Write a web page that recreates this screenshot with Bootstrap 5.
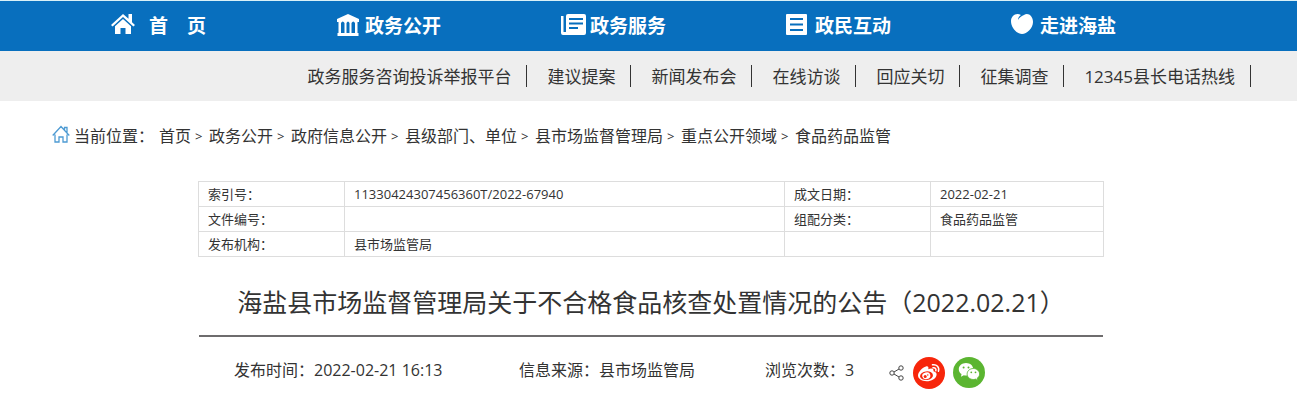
<!DOCTYPE html>
<html lang="zh-CN">
<head>
<meta charset="utf-8">
<meta name="viewport" content="width=device-width, initial-scale=1">
<title>海盐县市场监督管理局关于不合格食品核查处置情况的公告</title>
<link rel="stylesheet" href="https://cdn.jsdelivr.net/npm/bootstrap@5.3.0/dist/css/bootstrap.min.css">
<style>
body{font-family:"Open Sans","Noto Sans CJK SC",sans-serif;font-size:16px;line-height:24px;color:#333;background:#fff}
a{color:inherit;text-decoration:none}
.top-nav{background:#086fbe;border-top:1px solid #d9f1f8;color:#fff;font-size:19px;font-weight:700}
.top-nav .nav-list{max-width:1125px}
.top-nav a{height:50px;padding-left:25px}
.nav-ico{width:29px;flex:none}
.nav-ico svg{margin-bottom:4px}
.nav-home .nav-ico{width:38px}
.sub-nav{background:#eee;font-size:17px}
.page-wrap{max-width:1205px}
.sub-nav .page-wrap{min-height:50px;row-gap:8px}
.sub-nav li{padding:0 15px 0 20px;border-right:1px solid #333;height:22px;line-height:24px}
.crumbs{padding:23px 6px 33px}
.crumbs .home-ico{width:22px}
.crumb-label{margin-right:5px}
.crumb-sep{width:18px;padding-left:4px;font-size:13px}
.article{max-width:906px}
.article-shell{padding-left:5px}
.info-table{font-size:13px;line-height:18px;border-color:#ddd;table-layout:fixed}
.info-table td,.info-table th{height:25px;padding:3px 9px;font-weight:400;color:#333}
.c-label{width:146px}
.c-date{width:173px}
.article h1{font-size:25px;line-height:36px;font-weight:400;margin:27px 0 15px}
.rule{border:0;height:2px;background:#6e6c6d;opacity:1;margin:0 1px}
.meta{padding:20px 36px 0;line-height:26px}
.m-time{width:285px}
.m-src{width:246px}
.m-hits{width:124px}
.share-set{height:32px}
.share-btn{width:32px;height:32px}
.share-mark{width:16px;height:32px;margin-right:8px}
</style>
</head>
<body>
<nav class="top-nav" aria-label="主导航">
<ul class="nav-list list-unstyled mx-auto mb-0 row row-cols-5 g-0">
<li class="col nav-home"><a href="#" class="d-flex align-items-center"><span class="nav-ico"><svg class="d-block" width="24" height="24" viewBox="0 0 24 24" fill="#fff"><path d="M12 2 0 13l1.600 1.600L12 5l10.400 9.600L24 13l-3-2.800V2h-3.500v4.800z"/><path d="M12 7 4 14.300V22h5.500v-6h5v6H20v-7.700z"/></svg></span>首　页</a></li>
<li class="col"><a href="#" class="d-flex align-items-center"><span class="nav-ico"><svg class="d-block" width="24" height="24" viewBox="0 0 24 24" fill="#fff" fill-rule="evenodd"><path d="M12 2 1 7v3h1.500v11H1.500v3h21v-3h-1V10H23V7zM5 21V11q1.700-3 3.500 0v10zm5.500 0V11q1.500-3 3 0v10zm5 0V11q1.700-3 3.500 0v10z"/></svg></span>政务公开</a></li>
<li class="col"><a href="#" class="d-flex align-items-center"><span class="nav-ico"><svg class="d-block" width="25" height="24" viewBox="0 0 25 24"><path d="M0 4h2.500v16H5V4q0-2 2-2h16q2 0 2 2v17q0 2-2 2H2q-2 0-2-2z" fill="#fff"/><path d="M8 7h14M8 11.500h14M8 16h9" stroke="#086fbe" stroke-width="2"/></svg></span>政务服务</a></li>
<li class="col"><a href="#" class="d-flex align-items-center"><span class="nav-ico"><svg class="d-block" width="24" height="24" viewBox="0 0 24 24"><rect y="2" width="21" height="21" rx="1" fill="#fff"/><path d="M4 7h13M4 12.500h13M4 18h13" stroke="#086fbe" stroke-width="2"/></svg></span>政民互动</a></li>
<li class="col"><a href="#" class="d-flex align-items-center"><span class="nav-ico"><svg class="d-block" width="24" height="24" viewBox="0 0 24 24"><path d="M10 3C5 0 0 4 0 9c0 7 6 13 11 13s11-6 11-12c0-6-5-10-9-7-3 1-5 3-6 5 0-2 1-4 3-5z" fill="#fff"/></svg></span>走进海盐</a></li>
</ul>
</nav>
<nav class="sub-nav" aria-label="栏目导航">
<ul class="page-wrap list-unstyled mx-auto mb-0 d-flex flex-wrap justify-content-end align-items-center">
<li><a href="#">政务服务咨询投诉举报平台</a></li>
<li><a href="#">建议提案</a></li>
<li><a href="#">新闻发布会</a></li>
<li><a href="#">在线访谈</a></li>
<li><a href="#">回应关切</a></li>
<li><a href="#">征集调查</a></li>
<li><a href="#">12345县长电话热线</a></li>
</ul>
</nav>
<main class="page-wrap mx-auto">
<nav class="crumbs d-flex flex-wrap" aria-label="当前位置">
<span class="home-ico"><svg class="d-block" width="18" height="20" viewBox="0 0 18 20" fill="none" stroke="#4e9bd3" stroke-width="1.300"><path d="M.7 11.500 9 2.500l8.300 9M12.500 6V3.500H15V9M3 10.500V18h4v-5h4v5h4v-7.500"/></svg></span>
<span class="crumb-label">当前位置：</span>
<a href="#">首页</a><span class="crumb-sep">&gt;</span><a href="#">政务公开</a><span class="crumb-sep">&gt;</span><a href="#">政府信息公开</a><span class="crumb-sep">&gt;</span><a href="#">县级部门、单位</a><span class="crumb-sep">&gt;</span><a href="#">县市场监督管理局</a><span class="crumb-sep">&gt;</span><a href="#">重点公开领域</a><span class="crumb-sep">&gt;</span><a href="#">食品药品监管</a>
</nav>
<div class="article-shell">
<article class="article mx-auto">
<table class="info-table table table-bordered mb-0">
<colgroup><col class="c-label"><col><col class="c-label"><col class="c-date"></colgroup>
<tbody>
<tr><th scope="row">索引号：</th><td>11330424307456360T/2022-67940</td><th scope="row">成文日期：</th><td>2022-02-21</td></tr>
<tr><th scope="row">文件编号：</th><td></td><th scope="row">组配分类：</th><td>食品药品监管</td></tr>
<tr><th scope="row">发布机构：</th><td>县市场监管局</td><td></td><td></td></tr>
</tbody>
</table>
<h1 class="text-center">海盐县市场监督管理局关于不合格食品核查处置情况的公告（2022.02.21）</h1>
<hr class="rule">
<div class="meta d-flex flex-wrap align-items-start">
<span class="m-time">发布时间：2022-02-21 16:13</span>
<span class="m-src">信息来源：县市场监管局</span>
<span class="m-hits">浏览次数：3</span>
<div class="share-set d-flex align-items-center">
<button type="button" class="share-mark btn p-0 border-0 d-flex align-items-center" aria-label="分享"><svg width="16" height="16" viewBox="0 0 16 16" fill="none" stroke="#444"><circle cx="3" cy="8" r="2.200"/><circle cx="12" cy="3" r="2.200"/><circle cx="12" cy="13" r="2.200"/><path d="m5 7 5-3M5 9l5 3"/></svg></button>
<a href="#" class="share-btn me-2" aria-label="微博"><svg class="d-block" width="32" height="32" viewBox="0 0 32 32">
<circle cx="16" cy="16" r="16" fill="#f7260b"/>
<path d="M13 9.500c2-.6 2.900.8 2.300 2.700 2.700-1 5.600-1 5.200 2 2.500.7 3.500 2 3 4-.7 3.500-5 6-9.800 6C8.500 24.200 5 21.500 5 18.500c0-3.500 4.500-8 8-9z" fill="#fff"/>
<ellipse cx="13.500" cy="18.700" rx="6.500" ry="4.300" transform="rotate(-7 13.500 18.700)" fill="#f7260b"/>
<ellipse cx="13.300" cy="18.800" rx="4.100" ry="3.400" transform="rotate(-15 13.300 18.800)" fill="#fff"/>
<circle cx="12.200" cy="19.500" r="1.500" fill="#f7260b"/><circle cx="14.800" cy="18" r=".7" fill="#f7260b"/>
<path d="M19.500 7.800c4-.9 7.300 2.500 5.900 6.500M20 10.800c2.200-.4 3.500 1 2.800 3" fill="none" stroke="#fff" stroke-width="1.500" stroke-linecap="round"/>
</svg></a>
<a href="#" class="share-btn" aria-label="微信"><svg class="d-block" width="32" height="32" viewBox="0 0 32 32">
<ellipse cx="16" cy="15.500" rx="16" ry="15.500" fill="#5bb531"/>
<path d="M13 6C8.900 6 5.800 8.800 5.800 12.200c0 2 1 3.700 2.700 4.900l-.5 2.700 2.800-1.500c.7.200 1.500.3 2.300.3 4 0 7.200-2.900 7.200-6.300S17.200 6 13 6z" fill="#fff"/>
<path d="M20.300 11.500c-3.500 0-6.200 2.500-6.200 5.500s2.700 5.500 6.200 5.500c.8 0 1.500-.1 2.200-.4l2.200 1.400-.5-2.300c1.500-1 2.400-2.500 2.400-4.200 0-3-2.800-5.500-6.300-5.500z" fill="#fff" stroke="#5bb531" stroke-width=".8"/>
<g fill="#5bb531"><circle cx="10.600" cy="10.500" r="1"/><circle cx="15.500" cy="10.500" r="1"/><circle cx="18.300" cy="15.300" r=".9"/><circle cx="22.500" cy="15.300" r=".9"/></g>
</svg></a>
</div>
</div>
</article>
</div>
</main>
<script src="https://cdn.jsdelivr.net/npm/bootstrap@5.3.0/dist/js/bootstrap.bundle.min.js"></script>
</body>
</html>
